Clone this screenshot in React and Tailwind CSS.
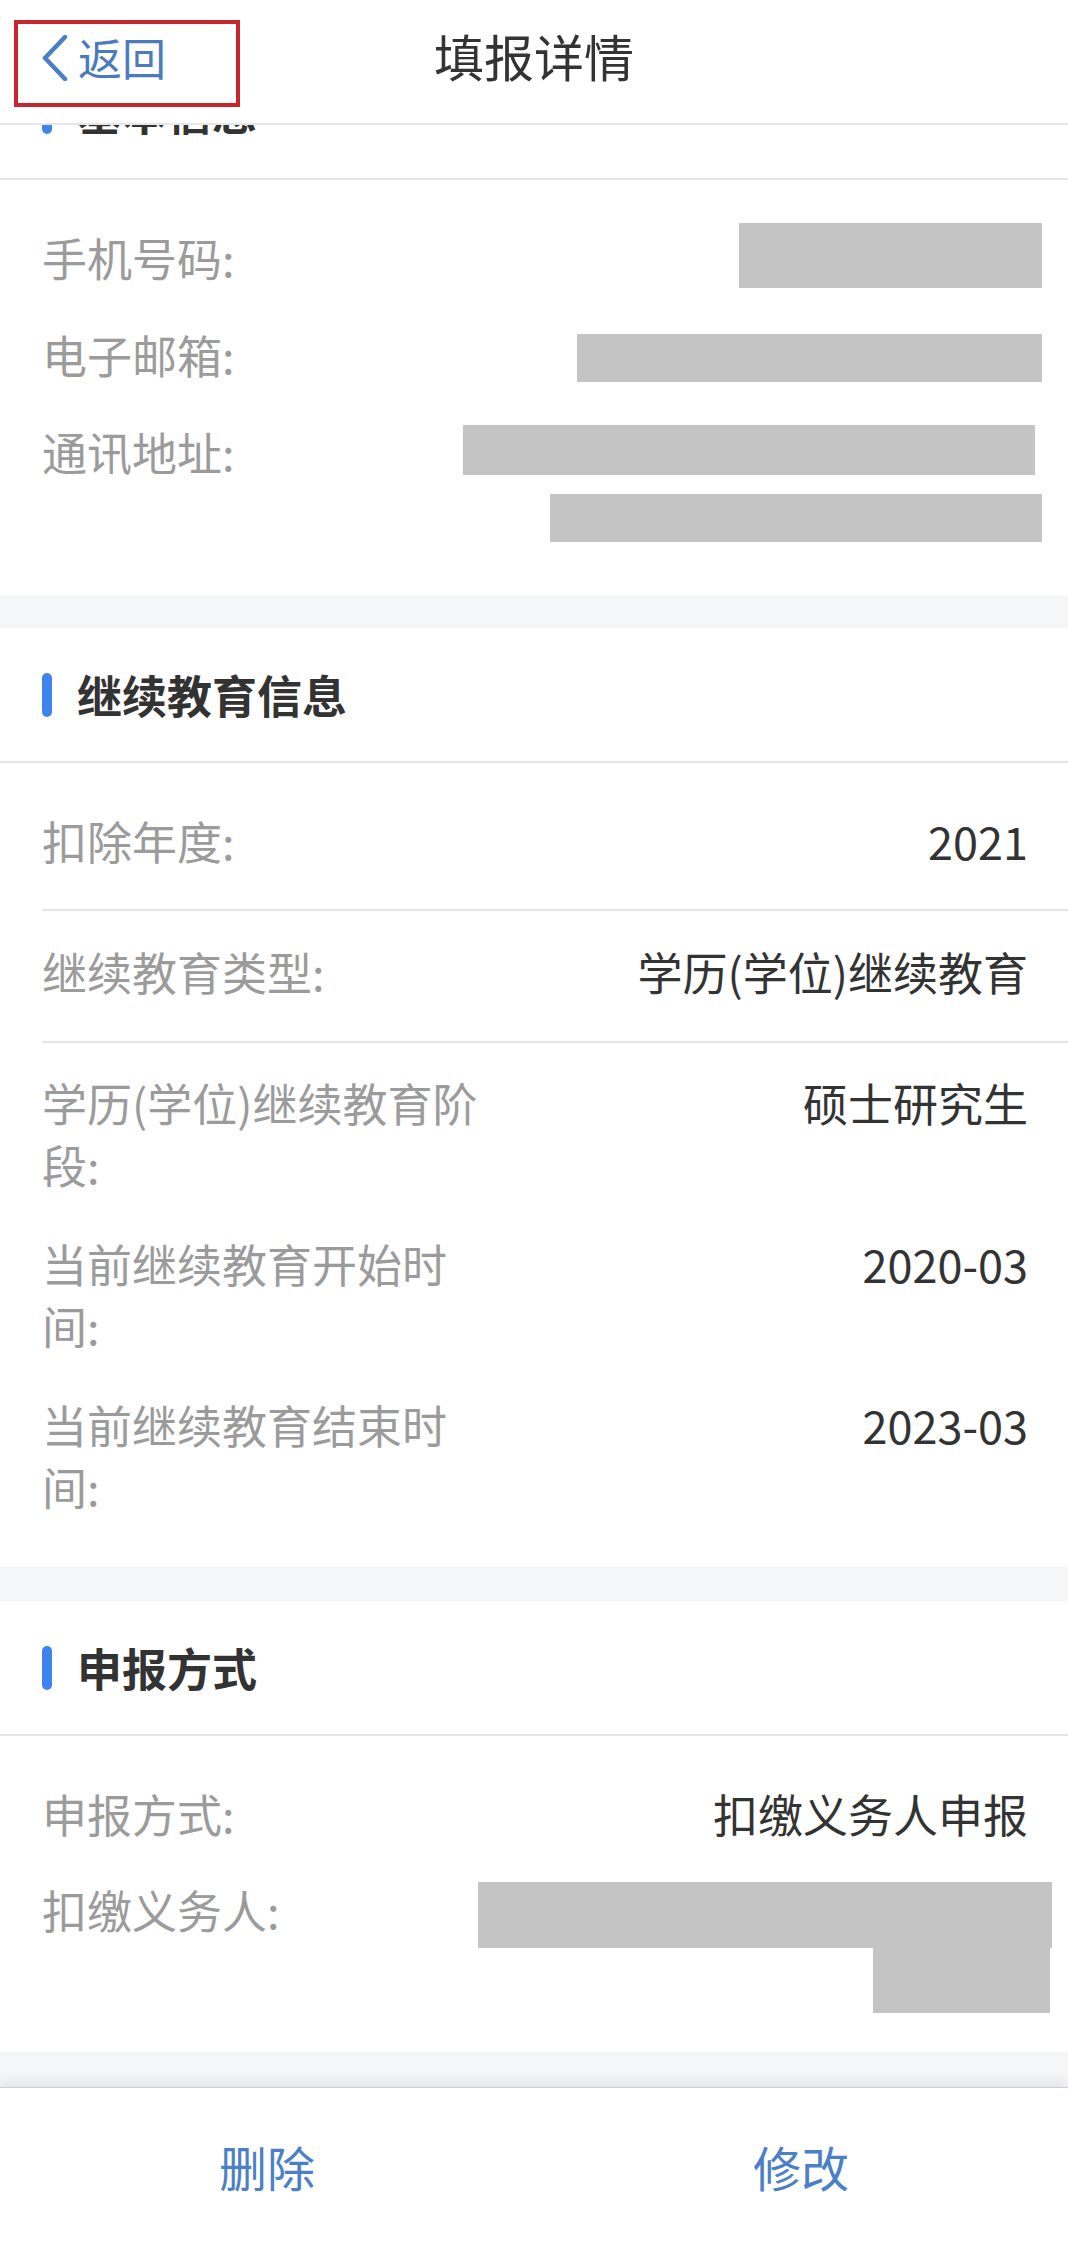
import React from 'react';

const font = "font-['Noto_Sans_CJK_SC','Noto_Sans',sans-serif]";

function SectionTitle({ title, className = '' }) {
  return (
    <div className={`h-[135px] flex items-center pl-[42px] border-b-2 border-[#e6e6e6] bg-white ${className}`}>
      <div className="w-[10px] h-[44px] rounded-full bg-[#3f84ee]" />
      <div className="ml-[25px] text-[45px] leading-[62px] font-bold text-[#333]">{title}</div>
    </div>
  );
}

function Label({ children, className = '' }) {
  return <div className={`text-[45px] leading-[62px] text-[#9b9b9b] ${className}`}>{children}</div>;
}

function Value({ children }) {
  return <div className="text-[45px] leading-[62px] text-[#333] text-right">{children}</div>;
}

function Redacted({ className }) {
  return <div className={`bg-[#c4c4c4] ${className}`} />;
}

function Separator({ h }) {
  return <div className={`bg-[#f5f6f8] ${h}`} />;
}

export default function App() {
  const eduRows = [
    { label: '学历(学位)继续教育阶段:', value: '硕士研究生' },
    { label: '当前继续教育开始时间:', value: '2020-03' },
    { label: '当前继续教育结束时间:', value: '2023-03' },
  ];

  return (
    <div className={`w-[1068px] h-[2260px] bg-white flex flex-col ${font}`}>
      {/* top bar */}
      <div className="h-[125px] shrink-0 grid grid-cols-[1fr_auto_1fr] border-b-2 border-[#e6e6e6] bg-white">
        <div>
          <div className="ml-[14px] mt-[20px] w-[226px] h-[87px] border-4 border-[#c9252d] flex items-start">
            <svg className="ml-[24px] mt-[11px] shrink-0" width="26" height="46" viewBox="0 0 26 46" fill="none">
              <path d="M23 2 L3 23 L23 44" stroke="#4a7fc2" strokeWidth="4.5" strokeLinecap="round" strokeLinejoin="round" />
            </svg>
            <span className="ml-[10px] mt-[2px] text-[44px] leading-[62px] text-[#4a7bbd]">返回</span>
          </div>
        </div>
        <div className="pt-[24px] text-[50px] leading-[62px] text-[#333]">填报详情</div>
        <div />
      </div>

      <div className="flex-1 overflow-hidden flex flex-col">
        {/* 基本信息 (scrolled under header) */}
        <SectionTitle title="基本信息" className="-mt-[80px]" />
        <div className="pt-[47px] pb-[50px] flex flex-col gap-[35px]">
          <div className="flex justify-between items-start pl-[42px] pr-[26px]">
            <Label>手机号码:</Label>
            <Redacted className="w-[303px] h-[65px] -mt-[4px]" />
          </div>
          <div className="flex justify-between items-start pl-[42px] pr-[26px]">
            <Label>电子邮箱:</Label>
            <Redacted className="w-[465px] h-[48px] mt-[10px]" />
          </div>
          <div className="h-[124px] flex justify-between items-start pl-[42px] pr-[26px]">
            <Label>通讯地址:</Label>
            <div className="flex flex-col items-end">
              <Redacted className="w-[572px] h-[50px] mt-[4px] mr-[7px]" />
              <Redacted className="w-[492px] h-[48px] mt-[19px]" />
            </div>
          </div>
        </div>

        <Separator h="h-[33px]" />

        {/* 继续教育信息 */}
        <SectionTitle title="继续教育信息" />
        <div className="ml-[42px] pr-[40px] pt-[47px] pb-[37px] flex justify-between border-b-2 border-[#e6e6e6]">
          <Label>扣除年度:</Label>
          <Value>2021</Value>
        </div>
        <div className="ml-[42px] pr-[40px] pt-[30px] pb-[38px] flex justify-between border-b-2 border-[#e6e6e6]">
          <Label>继续教育类型:</Label>
          <Value>学历(学位)继续教育</Value>
        </div>
        <div className="ml-[42px] pr-[40px] pt-[29px] pb-[49px] flex flex-col gap-[37px]">
          {eduRows.map((row) => (
            <div key={row.label} className="flex justify-between items-start">
              <Label className="w-[444px] shrink-0">{row.label}</Label>
              <Value>{row.value}</Value>
            </div>
          ))}
        </div>

        <Separator h="h-[34px]" />

        {/* 申报方式 */}
        <SectionTitle title="申报方式" />
        <div className="pt-[47px] pb-[39px] flex flex-col gap-[34px]">
          <div className="flex justify-between items-start pl-[42px] pr-[40px]">
            <Label>申报方式:</Label>
            <Value>扣缴义务人申报</Value>
          </div>
          <div className="flex justify-between items-start pl-[42px] pr-[16px]">
            <Label>扣缴义务人:</Label>
            <div className="flex flex-col items-end">
              <Redacted className="w-[574px] h-[66px] mt-[3px]" />
              <Redacted className="w-[177px] h-[65px] mr-[2px]" />
            </div>
          </div>
        </div>

        <Separator h="flex-1" />
      </div>

      {/* bottom actions */}
      <div className="h-[173px] shrink-0 flex border-t border-[#cfcfcf] bg-white relative shadow-[0_-6px_12px_rgba(0,0,0,0.07)]">
        <div className="flex-1 pt-[47px] text-center text-[48px] leading-[62px] text-[#4b80c9]">删除</div>
        <div className="flex-1 pt-[47px] text-center text-[48px] leading-[62px] text-[#4b80c9]">修改</div>
      </div>
    </div>
  );
}
